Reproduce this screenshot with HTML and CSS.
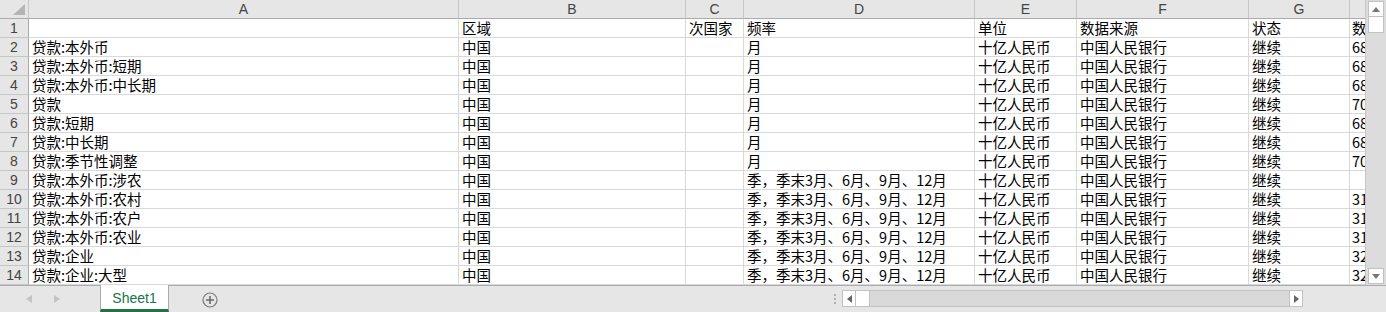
FILE: index.html
```html
<!DOCTYPE html>
<html lang="zh">
<head>
<meta charset="utf-8">
<link rel="stylesheet" href="styles.css">
</head>
<body>
<div class="app">
  <div class="main">
    <div class="sheet">
      <div class="row head">
        <div class="corner"><svg width="12" height="11" viewBox="0 0 12 11"><polygon points="12,0 12,11 0,11" fill="#b4b4b4"/></svg></div>
        <div class="ch">A</div><div class="ch">B</div><div class="ch">C</div><div class="ch">D</div><div class="ch">E</div><div class="ch">F</div><div class="ch">G</div><div class="ch"></div>
      </div>
      <div class="row"><div class="rh">1</div><div class="c"></div><div class="c">区域</div><div class="c">次国家</div><div class="c">频率</div><div class="c">单位</div><div class="c">数据来源</div><div class="c">状态</div><div class="c">数据</div></div>
      <div class="row"><div class="rh">2</div><div class="c">贷款:本外币</div><div class="c">中国</div><div class="c"></div><div class="c">月</div><div class="c">十亿人民币</div><div class="c">中国人民银行</div><div class="c">继续</div><div class="c">68</div></div>
      <div class="row"><div class="rh">3</div><div class="c">贷款:本外币:短期</div><div class="c">中国</div><div class="c"></div><div class="c">月</div><div class="c">十亿人民币</div><div class="c">中国人民银行</div><div class="c">继续</div><div class="c">68</div></div>
      <div class="row"><div class="rh">4</div><div class="c">贷款:本外币:中长期</div><div class="c">中国</div><div class="c"></div><div class="c">月</div><div class="c">十亿人民币</div><div class="c">中国人民银行</div><div class="c">继续</div><div class="c">68</div></div>
      <div class="row"><div class="rh">5</div><div class="c">贷款</div><div class="c">中国</div><div class="c"></div><div class="c">月</div><div class="c">十亿人民币</div><div class="c">中国人民银行</div><div class="c">继续</div><div class="c">70</div></div>
      <div class="row"><div class="rh">6</div><div class="c">贷款:短期</div><div class="c">中国</div><div class="c"></div><div class="c">月</div><div class="c">十亿人民币</div><div class="c">中国人民银行</div><div class="c">继续</div><div class="c">68</div></div>
      <div class="row"><div class="rh">7</div><div class="c">贷款:中长期</div><div class="c">中国</div><div class="c"></div><div class="c">月</div><div class="c">十亿人民币</div><div class="c">中国人民银行</div><div class="c">继续</div><div class="c">68</div></div>
      <div class="row"><div class="rh">8</div><div class="c">贷款:季节性调整</div><div class="c">中国</div><div class="c"></div><div class="c">月</div><div class="c">十亿人民币</div><div class="c">中国人民银行</div><div class="c">继续</div><div class="c">70</div></div>
      <div class="row"><div class="rh">9</div><div class="c">贷款:本外币:涉农</div><div class="c">中国</div><div class="c"></div><div class="c">季，季末3月、6月、9月、12月</div><div class="c">十亿人民币</div><div class="c">中国人民银行</div><div class="c">继续</div><div class="c"></div></div>
      <div class="row"><div class="rh">10</div><div class="c">贷款:本外币:农村</div><div class="c">中国</div><div class="c"></div><div class="c">季，季末3月、6月、9月、12月</div><div class="c">十亿人民币</div><div class="c">中国人民银行</div><div class="c">继续</div><div class="c">31</div></div>
      <div class="row"><div class="rh">11</div><div class="c">贷款:本外币:农户</div><div class="c">中国</div><div class="c"></div><div class="c">季，季末3月、6月、9月、12月</div><div class="c">十亿人民币</div><div class="c">中国人民银行</div><div class="c">继续</div><div class="c">31</div></div>
      <div class="row"><div class="rh">12</div><div class="c">贷款:本外币:农业</div><div class="c">中国</div><div class="c"></div><div class="c">季，季末3月、6月、9月、12月</div><div class="c">十亿人民币</div><div class="c">中国人民银行</div><div class="c">继续</div><div class="c">31</div></div>
      <div class="row"><div class="rh">13</div><div class="c">贷款:企业</div><div class="c">中国</div><div class="c"></div><div class="c">季，季末3月、6月、9月、12月</div><div class="c">十亿人民币</div><div class="c">中国人民银行</div><div class="c">继续</div><div class="c">32</div></div>
      <div class="row"><div class="rh">14</div><div class="c">贷款:企业:大型</div><div class="c">中国</div><div class="c"></div><div class="c">季，季末3月、6月、9月、12月</div><div class="c">十亿人民币</div><div class="c">中国人民银行</div><div class="c">继续</div><div class="c">32</div></div>
    </div>
    <div class="vscroll">
      <div class="sbtn"><svg width="8" height="5" viewBox="0 0 8 5"><polygon points="0,5 8,5 4,0" fill="#777"/></svg></div>
      <div class="vthumb"></div>
      <div class="vtrack"></div>
      <div class="sbtn"><svg width="8" height="5" viewBox="0 0 8 5"><polygon points="0,0 8,0 4,5" fill="#777"/></svg></div>
    </div>
  </div>
  <div class="bottom">
    <div class="nav">
      <svg width="6" height="8" viewBox="0 0 6 8"><polygon points="6,0 6,8 0,4" fill="#c4c4c4"/></svg>
      <svg width="6" height="8" viewBox="0 0 6 8"><polygon points="0,0 0,8 6,4" fill="#c4c4c4"/></svg>
    </div>
    <div class="tab">Sheet1</div>
    <div class="add"><svg width="16" height="16" viewBox="0 0 16 16"><circle cx="8" cy="8" r="7" fill="none" stroke="#7a7a7a" stroke-width="1.2"/><path d="M8 4v8M4 8h8" stroke="#6a6a6a" stroke-width="1.6"/></svg></div>
    <div class="spacer"></div>
    <div class="dots"><span></span><span></span><span></span></div>
    <div class="hscroll">
      <div class="hbtn"><svg width="5" height="8" viewBox="0 0 5 8"><polygon points="5,0 5,8 0,4" fill="#666"/></svg></div>
      <div class="hthumb"></div>
      <div class="htrack"></div>
      <div class="hbtn"><svg width="5" height="8" viewBox="0 0 5 8"><polygon points="0,0 0,8 5,4" fill="#666"/></svg></div>
    </div>
    <div class="tail"></div>
  </div>
</div>
</body>
</html>
```
FILE: styles.css
```css
* { box-sizing: border-box; }
html, body { margin: 0; padding: 0; background: #e6e6e6; }
body {
  font-family: "Noto Sans CJK SC", "Noto Sans", "Liberation Sans", sans-serif;
  font-size: 14.5px;
  color: #000;
  width: 1386px;
  height: 312px;
  overflow: hidden;
}
.app { display: flex; flex-direction: column; height: 312px; }
.main { display: flex; height: 285px; }
.sheet { width: 1365px; background: #fff; overflow: hidden; }
.row {
  display: grid;
  grid-template-columns: 29px 430px 227px 58px 231px 102px 172px 101px 15px;
  height: 19px;
}
.row > div {
  border-right: 1px solid #d9d9d9;
  border-bottom: 1px solid #d9d9d9;
  white-space: nowrap;
  line-height: 18px;
  min-width: 0;
}
.row .c { padding-left: 3px; }
.row .c:last-child { border-right: none; padding-left: 2px; }
.head { height: 19px; background: #e6e6e6; }
.head > div {
  background: #e6e6e6;
  border-right: 1px solid #c6c6c6;
  border-bottom: 1px solid #ababab;
  color: #444;
  text-align: center;
  font-family: "Liberation Sans", sans-serif;
  font-size: 14px;
  line-height: 18px;
}
.head > div:last-child { border-right: none; }
.corner { display: flex; align-items: flex-end; justify-content: flex-end; padding: 0 3px 3px 0; }
.row > .rh {
  background: #e6e6e6;
  border-right: 1px solid #ababab;
  border-bottom: 1px solid #c6c6c6;
  color: #444;
  text-align: center;
  font-family: "Liberation Sans", sans-serif;
  font-size: 14px;
}
.vscroll {
  width: 21px;
  display: flex;
  flex-direction: column;
  align-items: center;
  background: #dcdcdc;
  border-left: 1px solid #c6c6c6;
  padding: 1px 0;
}
.sbtn {
  width: 16px; height: 16px;
  background: #fff;
  border: 1px solid #c2c2c2;
  display: flex; align-items: center; justify-content: center;
}
.vthumb { width: 16px; height: 16px; background: #fff; border: 1px solid #c2c2c2; border-top: none; }
.vtrack { flex: 1; }
.bottom {
  height: 27px;
  display: flex;
  align-items: stretch;
  background: #e6e6e6;
  border-top: 1px solid #ababab;
}
.nav { width: 100px; display: flex; align-items: center; gap: 22px; padding-left: 26px; }
.tab {
  width: 69px;
  margin-top: -1px;
  background: #fff;
  border-left: 1px solid #ababab;
  border-right: 1px solid #ababab;
  border-bottom: 3px solid #217346;
  color: #217346;
  font-family: "Liberation Sans", sans-serif;
  font-size: 14px;
  display: flex; align-items: center; justify-content: center;
  padding-top: 1px;
}
.add { width: 49px; display: flex; align-items: center; justify-content: flex-end; padding-top: 1px; }
.spacer { flex: 1; }
.dots { width: 14px; display: flex; flex-direction: column; justify-content: center; align-items: center; gap: 2px; }
.dots span { width: 2px; height: 2px; background: #b0b0b0; display: block; }
.hscroll {
  width: 461px;
  margin: 4px 0 5px 0;
  display: flex;
  background: #d9d9d9;
  border: 1px solid #c2c2c2;
}
.hbtn { width: 13px; background: #fff; display: flex; align-items: center; justify-content: center; }
.hbtn:first-child { border-right: 1px solid #c2c2c2; }
.hbtn:last-child { border-left: 1px solid #c2c2c2; }
.hthumb { width: 14px; background: #fff; border-right: 1px solid #c2c2c2; }
.htrack { flex: 1; }
.tail { width: 83px; }
```
